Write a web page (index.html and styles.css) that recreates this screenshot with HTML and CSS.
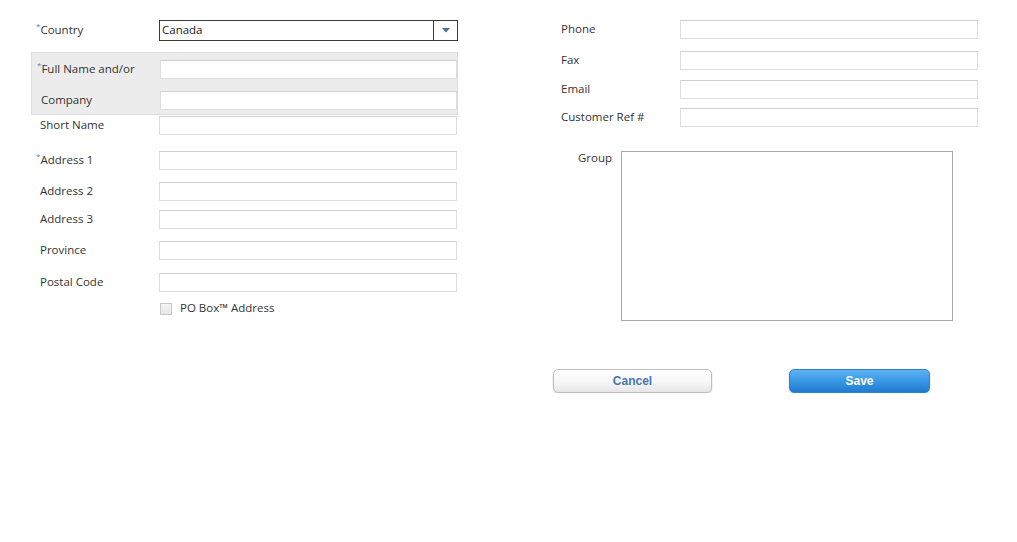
FILE: index.html
```html
<!DOCTYPE html>
<html>
<head>
<meta charset="utf-8">
<link rel="stylesheet" href="styles.css">
</head>
<body>
<div class="page">
  <div class="col-left">
    <div class="row row-country">
      <div class="label"><span class="req">*</span>Country</div>
      <div class="select">
        <span class="select-value">Canada</span>
        <span class="select-arrow"><svg width="8" height="5" viewBox="0 0 8 5"><path d="M0 0H8L4 4.5Z" fill="#4a6f9a"/></svg></span>
      </div>
    </div>
    <div class="panel">
      <div class="row">
        <div class="label"><span class="req">*</span>Full Name and/or</div>
        <div class="input input-panel"></div>
      </div>
      <div class="row row-company">
        <div class="label">Company</div>
        <div class="input input-panel"></div>
      </div>
    </div>
    <div class="row row-short">
      <div class="label">Short Name</div>
      <div class="input"></div>
    </div>
    <div class="row row-a1">
      <div class="label"><span class="req">*</span>Address 1</div>
      <div class="input"></div>
    </div>
    <div class="row row-a2">
      <div class="label">Address 2</div>
      <div class="input"></div>
    </div>
    <div class="row row-a3">
      <div class="label">Address 3</div>
      <div class="input"></div>
    </div>
    <div class="row row-prov">
      <div class="label">Province</div>
      <div class="input"></div>
    </div>
    <div class="row row-postal">
      <div class="label">Postal Code</div>
      <div class="input"></div>
    </div>
    <div class="row row-check">
      <div class="label"></div>
      <span class="checkbox"></span>
      <span class="check-label">PO Box™ Address</span>
    </div>
  </div>

  <div class="col-right">
    <div class="row rrow">
      <div class="rlabel">Phone</div>
      <div class="input"></div>
    </div>
    <div class="row rrow row-fax">
      <div class="rlabel">Fax</div>
      <div class="input"></div>
    </div>
    <div class="row rrow row-email">
      <div class="rlabel">Email</div>
      <div class="input"></div>
    </div>
    <div class="row rrow row-ref">
      <div class="rlabel">Customer Ref #</div>
      <div class="input"></div>
    </div>
    <div class="group-row">
      <div class="group-label">Group</div>
      <div class="group-box"></div>
    </div>
    <div class="buttons">
      <button class="btn btn-cancel">Cancel</button>
      <button class="btn btn-save">Save</button>
    </div>
  </div>
</div>
</body>
</html>
```

FILE: styles.css
```css
* { box-sizing: border-box; }
html, body { margin: 0; padding: 0; background: #fff; }
body {
  font-family: "Open Sans", "Noto Sans", sans-serif;
  font-size: 11.5px;
  color: #333;
}
.page {
  display: flex;
  padding: 20px 0 0 31px;
}
.col-left {
  width: 427px;
  display: flex;
  flex-direction: column;
}
.row {
  display: flex;
  align-items: center;
  height: 19px;
  flex-shrink: 0;
}
.label {
  width: 128px;
  padding-left: 9px;
  padding-bottom: 2px;
  white-space: nowrap;
  line-height: 16px;
}
.req {
  color: #5b7fd6;
  font-size: 8px;
  vertical-align: top;
  margin-left: -4px;
  line-height: 8px;
}
.input {
  width: 298px;
  height: 19px;
  background: #fff;
  border: 1px solid #dedede;
  border-top-color: #cfcfcf;
}
.input-panel { width: 297px; }

.row-country { height: 21px; }
.select {
  width: 299px;
  height: 21px;
  border: 1px solid #3a3a3a;
  display: flex;
  align-items: center;
  background: #fff;
}
.select-value {
  flex: 1;
  padding-left: 2px;
  padding-bottom: 2px;
  color: #222;
  line-height: 16px;
}
.select-arrow {
  width: 24px;
  height: 100%;
  border-left: 1px solid #3a3a3a;
  display: flex;
  align-items: center;
  justify-content: center;
}

.panel {
  margin-top: 11px;
  height: 63px;
  flex-shrink: 0;
  background: #ececec;
  border: 1px solid #dcdcdc;
  padding-top: 7px;
}
.row-company { margin-top: 12px; }

.row-short { margin-top: 1px; }
.row-a1 { margin-top: 16px; }
.row-a2 { margin-top: 12px; }
.row-a3 { margin-top: 9px; }
.row-prov { margin-top: 12px; }
.row-postal { margin-top: 13px; }
.row-check { margin-top: 10px; height: 14px; }

.checkbox {
  width: 12px;
  height: 12px;
  border: 1px solid #c8c8c8;
  background: linear-gradient(#f4f4f4, #e6e6e6);
  margin-left: 1px;
}
.check-label {
  margin-left: 8px;
  padding-bottom: 2px;
  line-height: 14px;
}

.col-right {
  margin-left: 103px;
  display: flex;
  flex-direction: column;
}
.rlabel {
  width: 119px;
  padding-bottom: 2px;
  white-space: nowrap;
  line-height: 16px;
}
.row-fax { margin-top: 12px; }
.row-email { margin-top: 10px; }
.row-ref { margin-top: 9px; }

.group-row {
  display: flex;
  margin-top: 24px;
}
.group-label {
  width: 60px;
  text-align: right;
  padding-right: 9px;
  line-height: 14px;
}
.group-box {
  width: 332px;
  height: 170px;
  border: 1px solid #a8a8a8;
  background: #fff;
}

.buttons {
  display: flex;
  margin-top: 48px;
  margin-left: -8px;
  gap: 77px;
}
.btn {
  height: 24px;
  border-radius: 5px;
  font-family: "Liberation Sans", Arial, sans-serif;
  font-weight: bold;
  font-size: 12px;
  padding: 0;
  cursor: pointer;
}
.btn-cancel {
  width: 159px;
  color: #4676ad;
  background: linear-gradient(#ffffff 0%, #f7f7f7 55%, #e6e6e6 100%);
  border: 1px solid #bcbcbc;
  box-shadow: 0 1px 2px rgba(0,0,0,0.18);
}
.btn-save {
  width: 141px;
  color: #fff;
  background: linear-gradient(#5eb2f2 0%, #3a97e6 50%, #1f7bd0 100%);
  border: 1px solid #2f82d2;
  box-shadow: 0 1px 2px rgba(0,0,0,0.18);
}
```
